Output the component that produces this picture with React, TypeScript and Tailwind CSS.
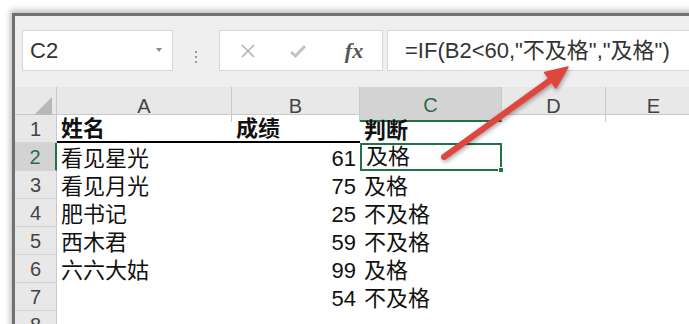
import React from 'react';

type Row = { n: number; a: string; b: string; c: string; bold?: boolean };

const rows: Row[] = [
	{ n: 1, a: '姓名', b: '成绩', c: '判断', bold: true },
	{ n: 2, a: '看见星光', b: '61', c: '及格' },
	{ n: 3, a: '看见月光', b: '75', c: '及格' },
	{ n: 4, a: '肥书记', b: '25', c: '不及格' },
	{ n: 5, a: '西木君', b: '59', c: '不及格' },
	{ n: 6, a: '六六大姑', b: '99', c: '及格' },
	{ n: 7, a: '', b: '54', c: '不及格' },
	{ n: 8, a: '', b: '', c: '' },
];

const cols = ['A', 'B', 'C', 'D', 'E'];
const gridCols = 'grid grid-cols-[42px_175px_128px_142px_104px_1fr]';
const font = { fontFamily: '"Liberation Sans", "Noto Sans CJK SC", sans-serif' };

function FormulaBar() {
	return (
		<div className="flex h-[71px] bg-[#efefef] pl-[7px] pt-[14px]">
			<div className="relative flex h-[41px] w-[151px] items-center border border-[#d6d6d6] bg-white pl-[7px] text-[22px] text-[#333]">
				C2
				{/* dropdown caret */}
				<span className="absolute right-[10px] top-[17px] h-0 w-0 border-x-[3px] border-t-[4px] border-x-transparent border-t-[#8a8a8a]" />
			</div>
			<div className="flex w-[46px] flex-col items-center justify-center gap-[3px] pb-[3px]">
				<span className="h-[2px] w-[2px] bg-[#9a9a9a]" />
				<span className="h-[2px] w-[2px] bg-[#9a9a9a]" />
				<span className="h-[2px] w-[2px] bg-[#9a9a9a]" />
			</div>
			<div className="flex h-[41px] w-[164px] items-center border border-[#d6d6d6] bg-white">
				<div className="flex w-[52px] justify-center pl-[4px]">
					<svg width="16" height="16" viewBox="0 0 16 16">
						<path d="M2 2L14 14M14 2L2 14" stroke="#b3b3b3" strokeWidth="1.6" />
					</svg>
				</div>
				<div className="flex w-[52px] justify-center">
					<svg width="18" height="16" viewBox="0 0 18 16">
						<path d="M2 9L6.5 13L16 3" stroke="#c2c2c2" strokeWidth="3" fill="none" />
					</svg>
				</div>
				<div
					className="flex flex-1 justify-center pl-[2px] text-[22px] font-bold italic text-[#555]"
					style={{ fontFamily: '"Liberation Serif", serif' }}
				>
					fx
				</div>
			</div>
			<div className="ml-[4px] flex h-[41px] flex-1 items-center border border-[#d6d6d6] bg-white pl-[17px] text-[22px] text-[#333]">
				=IF(B2&lt;60,"不及格","及格")
			</div>
		</div>
	);
}

function ColumnHeaders() {
	return (
		<div className={`${gridCols} h-[28px] border-b border-[#c9c9c9] bg-[#e8e8e8] text-[20px] text-[#444]`}>
			<div className="flex items-end justify-end border-r border-[#c9c9c9] pb-[4px] pr-[4px]">
				<span className="h-0 w-0 border-b-[21px] border-l-[21px] border-b-[#b8b8b8] border-l-transparent" />
			</div>
			{cols.map((c) =>
				c === 'C' ? (
					<div
						key={c}
						className="flex items-center justify-center border-b-2 border-r border-b-[#217346] border-r-[#c9c9c9] bg-[#d3d3d3] pt-[3px] text-[#2d6a48]"
					>
						{c}
					</div>
				) : (
					<div key={c} className="flex items-center justify-center border-r border-[#c9c9c9] pt-[3px]">
						{c}
					</div>
				),
			)}
		</div>
	);
}

function DataRow({ row }: { row: Row }) {
	const sel = row.n === 2;
	const weight = row.bold ? 'font-bold' : '';
	const cell = 'flex h-[28px] items-end leading-[24px] text-[22px] text-[#111]';
	return (
		<div className={gridCols}>
			<div
				className={`flex h-[28px] items-center justify-center border-b border-[#d4d4d4] pt-[1px] text-[20px] ${
					sel
						? 'border-r-2 border-r-[#217346] bg-[#d3d3d3] text-[#2d6a48]'
						: 'border-r border-r-[#c9c9c9] bg-[#e8e8e8] text-[#444]'
				}`}
			>
				{row.n}
			</div>
			<div className={`${cell} ${weight} pl-[4px] ${row.n === 1 ? 'border-b-2 border-black' : ''}`}>{row.a}</div>
			<div
				className={`${cell} ${weight} ${row.bold ? 'pl-[4px]' : 'justify-end pr-[4px]'} ${
					row.n === 1 ? 'border-b-2 border-black' : ''
				}`}
			>
				{row.b}
			</div>
			<div className={`${cell} ${weight} relative pl-[4px] ${sel ? 'border-2 border-[#217346] pl-[2px]' : ''}`}>
				{row.c}
				{sel && (
					<span className="absolute -bottom-[4px] -right-[4px] h-[6px] w-[6px] border border-white bg-[#217346]" />
				)}
			</div>
			<div />
			<div />
		</div>
	);
}

function Arrow() {
	return (
		<svg
			className="pointer-events-none absolute left-0 top-0 drop-shadow-[1px_2px_2px_rgba(0,0,0,0.35)]"
			width="689"
			height="324"
			viewBox="0 0 689 324"
		>
			<line x1="444" y1="157" x2="552" y2="79" stroke="#e0463e" strokeWidth="6" strokeLinecap="round" />
			<polygon points="568,67 556,88 544.6,72.5" fill="#e0463e" stroke="#e0463e" strokeWidth="1.5" strokeLinejoin="round" />
		</svg>
	);
}

export default function App() {
	return (
		<div className="relative h-[324px] w-[689px] overflow-hidden bg-white" style={font}>
			<div className="ml-[12px] mt-[13px] w-[690px] border-l-[3px] border-t-[3px] border-[#707070] shadow-[-2px_-3px_6px_rgba(0,0,0,0.25)]">
				<FormulaBar />
				<ColumnHeaders />
				{rows.map((r) => (
					<DataRow key={r.n} row={r} />
				))}
			</div>
			<Arrow />
		</div>
	);
}
